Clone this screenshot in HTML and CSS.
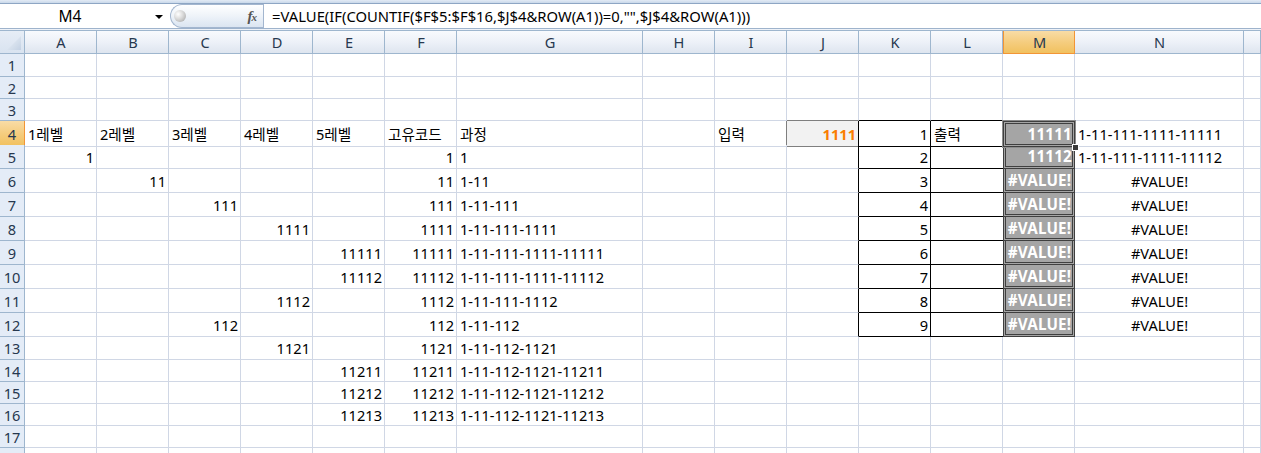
FILE: index.html
```html
<!DOCTYPE html>
<html lang="ko">
<head>
<meta charset="utf-8">
<title>Excel</title>
<link rel="stylesheet" href="styles.css">
</head>
<body>
<div class="ribbon-edge"></div>
<div class="fbar">
  <div class="namebox"><span class="name">M4</span><span class="dd"></span></div>
  <div class="fxpill"><span class="knob"></span><span class="fx"><i>f</i><i class="x">x</i></span></div>
  <div class="formula">=VALUE(IF(COUNTIF($F$5:$F$16,$J$4&amp;ROW(A1))=0,"",$J$4&amp;ROW(A1)))</div>
</div>
<div class="gap"></div>
<div class="sheet">
  <div class="row hdr">
    <div class="corner"></div><div class="ch">A</div><div class="ch">B</div><div class="ch">C</div><div class="ch">D</div><div class="ch">E</div><div class="ch">F</div><div class="ch">G</div><div class="ch">H</div><div class="ch">I</div><div class="ch">J</div><div class="ch">K</div><div class="ch">L</div><div class="ch sel">M</div><div class="ch">N</div><div class="ch"></div>
  </div>
  <div class="row h23">
    <div class="rh">1</div><div></div><div></div><div></div><div></div><div></div><div></div><div></div><div></div><div></div><div></div><div></div><div></div><div></div><div></div><div></div>
  </div>
  <div class="row h22">
    <div class="rh">2</div><div></div><div></div><div></div><div></div><div></div><div></div><div></div><div></div><div></div><div></div><div></div><div></div><div></div><div></div><div></div>
  </div>
  <div class="row h22">
    <div class="rh">3</div><div></div><div></div><div></div><div></div><div></div><div></div><div></div><div></div><div></div><div class="jt"></div><div class="kt"></div><div class="kt"></div><div></div><div></div><div></div>
  </div>
  <div class="row">
    <div class="rh sel">4</div><div>1레벨</div><div>2레벨</div><div>3레벨</div><div>4레벨</div><div>5레벨</div><div>고유코드</div><div>과정</div><div></div><div class="ir">입력</div><div class="calc">1111</div><div class="kb">1</div><div class="lb">출력</div><div class="chk top active">11111<span class="cursor"><span class="handle"></span></span></div><div>1-11-111-1111-11111</div><div></div>
  </div>
  <div class="row">
    <div class="rh">5</div><div class="n">1</div><div></div><div></div><div></div><div></div><div class="n">1</div><div>1</div><div></div><div></div><div class="jr"></div><div class="kb">2</div><div class="lb"></div><div class="chk">11112</div><div>1-11-111-1111-11112</div><div></div>
  </div>
  <div class="row">
    <div class="rh">6</div><div></div><div class="n">11</div><div></div><div></div><div></div><div class="n">11</div><div>1-11</div><div></div><div></div><div class="jr"></div><div class="kb">3</div><div class="lb"></div><div class="chk err">#VALUE!</div><div class="c">#VALUE!</div><div></div>
  </div>
  <div class="row">
    <div class="rh">7</div><div></div><div></div><div class="n">111</div><div></div><div></div><div class="n">111</div><div>1-11-111</div><div></div><div></div><div class="jr"></div><div class="kb">4</div><div class="lb"></div><div class="chk err">#VALUE!</div><div class="c">#VALUE!</div><div></div>
  </div>
  <div class="row">
    <div class="rh">8</div><div></div><div></div><div></div><div class="n">1111</div><div></div><div class="n">1111</div><div>1-11-111-1111</div><div></div><div></div><div class="jr"></div><div class="kb">5</div><div class="lb"></div><div class="chk err">#VALUE!</div><div class="c">#VALUE!</div><div></div>
  </div>
  <div class="row">
    <div class="rh">9</div><div></div><div></div><div></div><div></div><div class="n">11111</div><div class="n">11111</div><div>1-11-111-1111-11111</div><div></div><div></div><div class="jr"></div><div class="kb">6</div><div class="lb"></div><div class="chk err">#VALUE!</div><div class="c">#VALUE!</div><div></div>
  </div>
  <div class="row">
    <div class="rh">10</div><div></div><div></div><div></div><div></div><div class="n">11112</div><div class="n">11112</div><div>1-11-111-1111-11112</div><div></div><div></div><div class="jr"></div><div class="kb">7</div><div class="lb"></div><div class="chk err">#VALUE!</div><div class="c">#VALUE!</div><div></div>
  </div>
  <div class="row">
    <div class="rh">11</div><div></div><div></div><div></div><div class="n">1112</div><div></div><div class="n">1112</div><div>1-11-111-1112</div><div></div><div></div><div class="jr"></div><div class="kb">8</div><div class="lb"></div><div class="chk err">#VALUE!</div><div class="c">#VALUE!</div><div></div>
  </div>
  <div class="row">
    <div class="rh">12</div><div></div><div></div><div class="n">112</div><div></div><div></div><div class="n">112</div><div>1-11-112</div><div></div><div></div><div class="jr"></div><div class="kb">9</div><div class="lb"></div><div class="chk err">#VALUE!</div><div class="c">#VALUE!</div><div></div>
  </div>
  <div class="row h23">
    <div class="rh">13</div><div></div><div></div><div></div><div class="n">1121</div><div></div><div class="n">1121</div><div>1-11-112-1121</div><div></div><div></div><div></div><div></div><div></div><div></div><div></div><div></div>
  </div>
  <div class="row h22">
    <div class="rh">14</div><div></div><div></div><div></div><div></div><div class="n">11211</div><div class="n">11211</div><div>1-11-112-1121-11211</div><div></div><div></div><div></div><div></div><div></div><div></div><div></div><div></div>
  </div>
  <div class="row h22">
    <div class="rh">15</div><div></div><div></div><div></div><div></div><div class="n">11212</div><div class="n">11212</div><div>1-11-112-1121-11212</div><div></div><div></div><div></div><div></div><div></div><div></div><div></div><div></div>
  </div>
  <div class="row h22">
    <div class="rh">16</div><div></div><div></div><div></div><div></div><div class="n">11213</div><div class="n">11213</div><div>1-11-112-1121-11213</div><div></div><div></div><div></div><div></div><div></div><div></div><div></div><div></div>
  </div>
  <div class="row h22">
    <div class="rh">17</div><div></div><div></div><div></div><div></div><div></div><div></div><div></div><div></div><div></div><div></div><div></div><div></div><div></div><div></div><div></div>
  </div>
  <div class="row h22">
    <div class="rh"></div><div></div><div></div><div></div><div></div><div></div><div></div><div></div><div></div><div></div><div></div><div></div><div></div><div></div><div></div><div></div>
  </div>
</div>
</body>
</html>
```

FILE: styles.css
```css
* { box-sizing: border-box; }

body {
  margin: 0;
  width: 1261px;
  height: 453px;
  overflow: hidden;
  background: #ffffff;
  font-family: "Noto Sans", "Noto Sans CJK KR", sans-serif;
  font-size: 14.6px;
  color: #000000;
}

/* ---------- top / formula bar ---------- */
.ribbon-edge {
  height: 4px;
  background: linear-gradient(#e3ebf5, #c9d8ea);
  border-bottom: 1px solid #8ea6c4;
}

.fbar {
  display: flex;
  height: 25px;
  background: #ffffff;
  border-bottom: 1px solid #9eb3cc;
}

.namebox {
  width: 170px;
  display: flex;
  align-items: center;
}

.name {
  width: 140px;
  text-align: center;
  font-size: 15.5px;
  color: #000;
}

.dd {
  margin-left: 15px;
  width: 0;
  height: 0;
  border-left: 4px solid transparent;
  border-right: 4px solid transparent;
  border-top: 4px solid #000;
  margin-top: 1px;
}

.fxpill {
  width: 93px;
  display: flex;
  align-items: center;
  justify-content: space-between;
  border: 1px solid #a3b6cf;
  border-right: none;
  border-radius: 12px 0 0 12px;
  background: linear-gradient(#ffffff 0%, #eef3f9 50%, #dbe5f1 100%);
  padding: 0 7px 0 2px;
}

.knob {
  width: 12px;
  height: 12px;
  border-radius: 50%;
  background: radial-gradient(circle at 35% 35%, #ffffff 0%, #d8d8d8 45%, #9e9e9e 100%);
  margin-left: 1px;
}

.fx {
  font-family: "Liberation Serif", serif;
  font-size: 15px;
  color: #555;
  font-weight: bold;
  letter-spacing: -1px;
}

.fx .x {
  font-size: 11px;
}

.formula {
  flex: 1;
  display: flex;
  align-items: center;
  border-left: 1px solid #a3b6cf;
  padding-left: 8px;
  font-size: 14.8px;
  white-space: nowrap;
}

.gap {
  height: 1px;
  background: #eef2f8;
}

/* ---------- sheet ---------- */
.row {
  display: grid;
  grid-template-columns: 25px repeat(6, 72px) 186px repeat(6, 72px) 169px 17px;
  height: 24px;
}

.row.h22 { height: 22px; }
.row.h23 { height: 23px; }

.row > div {
  border-right: 1px solid #d0d7e5;
  border-bottom: 1px solid #d0d7e5;
  padding: 0 2px 0 3px;
  display: flex;
  align-items: center;
  white-space: nowrap;
}

.row > .n { justify-content: flex-end; }
.row > .c { justify-content: center; }

/* headers */
.row.hdr {
  height: 24px;
  border-top: 1px solid #9eb6ce;
}

.row > .corner {
  position: relative;
  background: linear-gradient(#e6edf6, #d9e3f0);
  border-right: 1px solid #9eb6ce;
  border-bottom: 1px solid #9eb6ce;
}

.corner::after {
  content: "";
  position: absolute;
  right: 3px;
  bottom: 3px;
  width: 14px;
  height: 14px;
  background: linear-gradient(135deg, #eef3f9, #c3d1e3);
  clip-path: polygon(100% 0, 100% 100%, 0 100%);
}

.row > .ch {
  justify-content: center;
  background: linear-gradient(#f8fafd 0%, #edf1f8 50%, #dee5ef 100%);
  border-right: 1px solid #9eb6ce;
  border-bottom: 1px solid #9eb6ce;
  color: #27384f;
  font-size: 14.6px;
}

.row > .rh {
  justify-content: center;
  padding: 0;
  background: #e4ecf7;
  border-right: 1px solid #9eb6ce;
  border-bottom: 1px solid #9eb6ce;
  color: #27384f;
  font-size: 14.6px;
}

.row > .ch.sel,
.row > .rh.sel {
  background: linear-gradient(#f9dca6 0%, #f5cd7f 50%, #f1c15f 100%);
  border: 1px solid #f29536;
}

.row > .rh.sel { border-left: none; border-top: none; }
.row > .ch.sel { border-top: none; }

/* bordered table K4:L12, calc cell J4 */
.row > .jt { border-bottom-color: #7f7f7f; }
.row > .kt { border-bottom-color: #000; }
.row > .ir { border-right-color: #7f7f7f; }
.row > .jr { border-right-color: #000; }

.row > .calc {
  justify-content: flex-end;
  background: #f2f2f2;
  color: #fa7d00;
  font-weight: bold;
  border-right-color: #000;
  border-bottom-color: #7f7f7f;
}

.row > .kb {
  justify-content: flex-end;
  border-right-color: #000;
  border-bottom-color: #000;
}

.row > .lb {
  border-bottom-color: #000;
  border-right: none;
}

.row > .chk {
  justify-content: flex-end;
  background: #a5a5a5;
  color: #ffffff;
  font-weight: bold;
  font-size: 15.2px;
  letter-spacing: 0.2px;
  border-left: 3px double #3f3f3f;
  border-right: 3px double #3f3f3f;
  border-bottom: 3px double #3f3f3f;
  padding: 0 0 0 1px;
}

.row > .chk.top { border-top: 3px double #3f3f3f; }
.row > .chk.err { justify-content: center; }

.row > .active { position: relative; }

.cursor {
  position: absolute;
  left: -4px;
  top: -4px;
  right: -4px;
  bottom: -4px;
  border: 1px solid #8c8c8c;
}

.handle {
  position: absolute;
  right: -4px;
  bottom: -4px;
  width: 7px;
  height: 7px;
  background: #3a3a3a;
  border: 1px solid #ffffff;
}
```
